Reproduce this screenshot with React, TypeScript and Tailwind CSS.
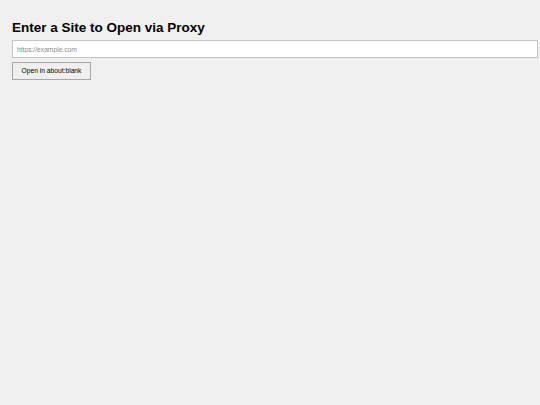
import React from "react";

export default function App() {
  return (
    <div className="min-h-[405px] w-full bg-[#f0f0f0] px-[12px] pt-[19px]" style={{ fontFamily: '"Liberation Sans", Arial, sans-serif' }}>
      <h1 className="text-[13.5px] leading-[18px] font-bold text-black">Enter a Site to Open via Proxy</h1>
      <input
        type="text"
        placeholder="https://example.com"
        className="mt-[3px] block h-[18px] w-[526px] border border-[#c4c4c4] bg-white px-[4px] text-[6.7px] text-black placeholder:text-[#8a8a8a] outline-none"
      />
      <button className="mt-[4px] block h-[18px] w-[79px] border border-[#a8a8a8] bg-[#efefef] text-[6.7px] text-black">
        Open in about:blank
      </button>
    </div>
  );
}
